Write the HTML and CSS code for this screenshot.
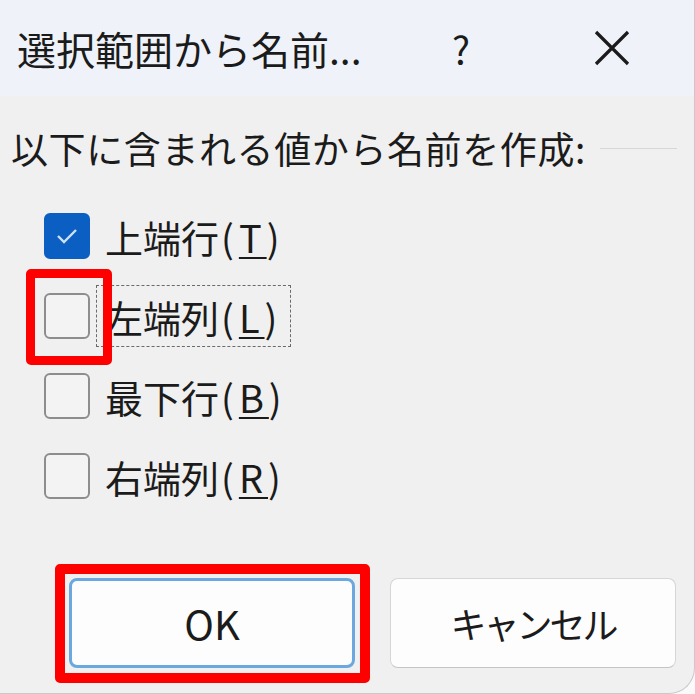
FILE: index.html
```html
<!DOCTYPE html>
<html lang="ja">
<head>
  <meta charset="UTF-8" />
  <title>選択範囲から名前を作成</title>
  <link rel="stylesheet" href="styles.css">
</head>
<body>

  <div class="dialog">
    <!-- Title bar -->
    <div class="titlebar">
      <span class="title">選択範囲から名前...</span>
      <span class="help">?</span>
      <span class="close">
        <svg width="36" height="36" viewBox="0 0 36 36">
          <path d="M2 2 L34 34 M34 2 L2 34" stroke="#1b1b1b" stroke-width="3.2" fill="none"/>
        </svg>
      </span>
    </div>

    <!-- Body -->
    <div class="content">
      <div class="group-label">
        <span>以下に含まれる値から名前を作成:</span>
        <span class="group-line"></span>
      </div>

      <div class="options">
        <div class="option">
          <span class="box checked">
            <svg width="24" height="18" viewBox="0 0 24 18">
              <path d="M3 9 L9 15 L21 3" stroke="#cfe0f5" stroke-width="2.4" fill="none"/>
            </svg>
          </span>
          <span class="label">上端行<span class="key">(<u>T</u>)</span></span>
        </div>
        <div class="option">
          <span class="box"></span>
          <span class="label focused">左端列<span class="key">(<u>L</u>)</span></span>
          <span class="mark mark-check"></span>
        </div>
        <div class="option">
          <span class="box"></span>
          <span class="label">最下行<span class="key">(<u>B</u>)</span></span>
        </div>
        <div class="option">
          <span class="box"></span>
          <span class="label">右端列<span class="key">(<u>R</u>)</span></span>
        </div>
      </div>

      <div class="buttons">
        <div class="btn-wrap">
          <button class="btn default">OK</button>
          <span class="mark mark-ok"></span>
        </div>
        <button class="btn cancel">キャンセル</button>
      </div>
    </div>
  </div>

</body>
</html>
```

FILE: styles.css
```css
body {
  margin: 0;
  background-color: #fafafa;
  font-family: "Noto Sans CJK JP", "Noto Sans", sans-serif;
  color: #1b1b1b;
}

.dialog {
  width: 694px;
  height: 693px;
  background-color: #f0f0f0;
  border-right: 1px solid #c9c9c9;
  border-bottom: 1px solid #c9c9c9;
  border-bottom-right-radius: 26px;
  overflow: hidden;
}

.titlebar {
  height: 96px;
  background-color: #eff3f9;
  display: flex;
  align-items: center;
  padding-left: 17px;
}

.title {
  font-size: 39px;
  width: 394px;
  white-space: nowrap;
}

.help {
  font-size: 38px;
  width: 100px;
  text-align: center;
}

.close {
  width: 108px;
  display: flex;
  justify-content: center;
  padding-left: 47px;
}

.content {
  padding-top: 30px;
}

.group-label {
  display: flex;
  align-items: center;
  font-size: 37px;
  letter-spacing: 0.6px;
  line-height: 44px;
  padding-left: 11px;
  padding-right: 17px;
}

.group-line {
  flex: 1;
  height: 1px;
  background-color: #d7d7d7;
  margin-left: 14px;
}

.options {
  margin-top: 26px;
  padding-left: 44px;
}

.option {
  position: relative;
  height: 80px;
  display: flex;
  align-items: center;
}

.box {
  width: 42px;
  height: 42px;
  border: 2px solid #8d8d8d;
  border-radius: 6px;
  background-color: #f3f3f3;
  display: flex;
  align-items: center;
  justify-content: center;
}

.box.checked {
  background-color: #0b5fc2;
  border-color: #0b5fc2;
}

.label {
  font-size: 38px;
  line-height: 44px;
  margin-left: 6px;
  padding: 9px 8px 7px;
  border: 1px dashed transparent;
}

.label.focused {
  border-color: #6a6a6a;
}

.key {
  letter-spacing: 5px;
  margin-left: 2px;
}

.label u {
  text-decoration-thickness: 2px;
  text-underline-offset: 4px;
}

.buttons {
  margin-top: 62px;
  padding-left: 69px;
  display: flex;
  gap: 35px;
}

.btn-wrap {
  position: relative;
  display: flex;
}

.btn {
  width: 286px;
  height: 90px;
  font-family: inherit;
  font-size: 38px;
  color: #1b1b1b;
  background-color: #fdfdfd;
  border: 1px solid #d6d6d6;
  border-bottom-color: #c4c4c4;
  border-radius: 8px;
  padding: 0;
}

.btn.default {
  border: 3px solid #6aa8df;
  font-size: 40px;
}

.btn.cancel {
  font-size: 36px;
  letter-spacing: -3px;
}

/* red annotation frames */
.mark {
  position: absolute;
  border: 9px solid #ff0000;
  border-radius: 5px;
}

.mark-check {
  left: -18px;
  top: -7px;
  width: 68px;
  height: 78px;
}

.mark-ok {
  left: -14px;
  top: -14px;
  width: 295px;
  height: 99px;
  border-width: 10px;
}
```
